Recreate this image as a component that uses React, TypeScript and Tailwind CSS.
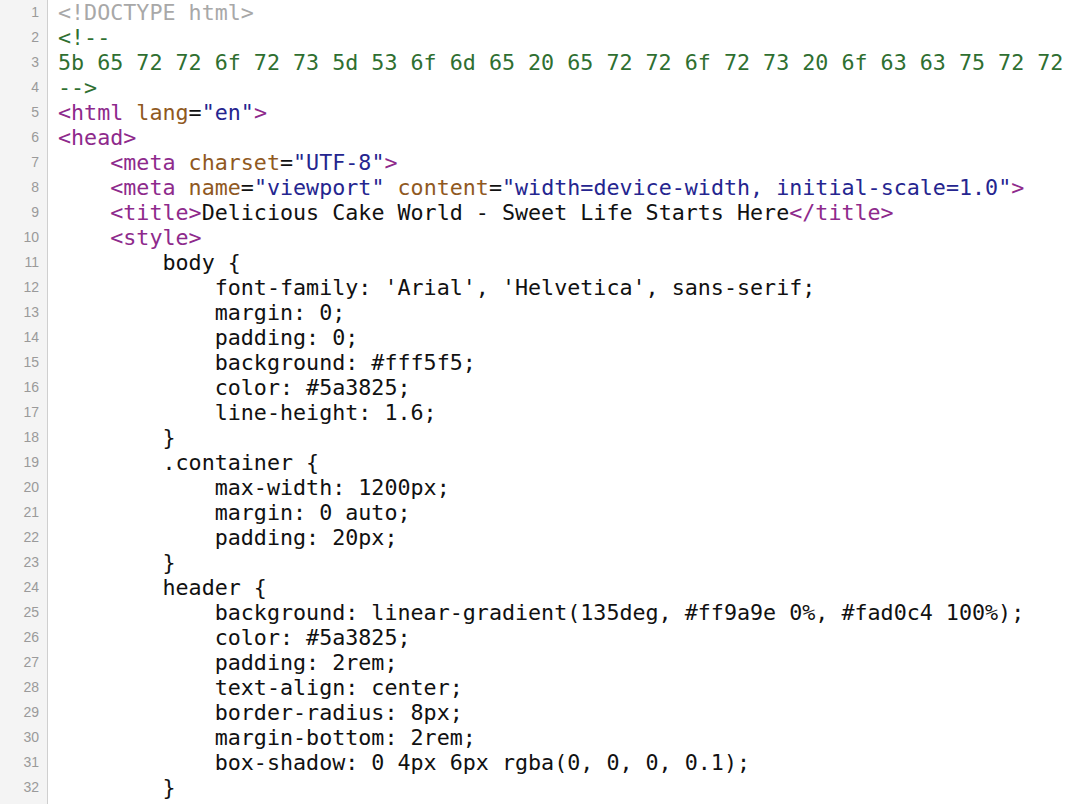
import React from "react";

type Seg = [string, string];

const T = "text-[#8e2a8c]"; // tags
const A = "text-[#90591f]"; // attribute names
const V = "text-[#25258f]"; // attribute values
const C = "text-[#2f6f31]"; // comments
const D = "text-[#a8a8a8]"; // doctype
const K = "text-[#111111]"; // plain

const lines: Seg[][] = [
  [[D, "<!DOCTYPE html>"]],
  [[C, "<!--"]],
  [[C, "5b 65 72 72 6f 72 73 5d 53 6f 6d 65 20 65 72 72 6f 72 73 20 6f 63 63 75 72 72"]],
  [[C, "-->"]],
  [[T, "<html "], [A, "lang"], [K, "="], [V, '"en"'], [T, ">"]],
  [[T, "<head>"]],
  [[K, "    "], [T, "<meta "], [A, "charset"], [K, "="], [V, '"UTF-8"'], [T, ">"]],
  [
    [K, "    "],
    [T, "<meta "],
    [A, "name"],
    [K, "="],
    [V, '"viewport"'],
    [K, " "],
    [A, "content"],
    [K, "="],
    [V, '"width=device-width, initial-scale=1.0"'],
    [T, ">"],
  ],
  [[K, "    "], [T, "<title>"], [K, "Delicious Cake World - Sweet Life Starts Here"], [T, "</title>"]],
  [[K, "    "], [T, "<style>"]],
  [[K, "        body {"]],
  [[K, "            font-family: 'Arial', 'Helvetica', sans-serif;"]],
  [[K, "            margin: 0;"]],
  [[K, "            padding: 0;"]],
  [[K, "            background: #fff5f5;"]],
  [[K, "            color: #5a3825;"]],
  [[K, "            line-height: 1.6;"]],
  [[K, "        }"]],
  [[K, "        .container {"]],
  [[K, "            max-width: 1200px;"]],
  [[K, "            margin: 0 auto;"]],
  [[K, "            padding: 20px;"]],
  [[K, "        }"]],
  [[K, "        header {"]],
  [[K, "            background: linear-gradient(135deg, #ff9a9e 0%, #fad0c4 100%);"]],
  [[K, "            color: #5a3825;"]],
  [[K, "            padding: 2rem;"]],
  [[K, "            text-align: center;"]],
  [[K, "            border-radius: 8px;"]],
  [[K, "            margin-bottom: 2rem;"]],
  [[K, "            box-shadow: 0 4px 6px rgba(0, 0, 0, 0.1);"]],
  [[K, "        }"]],
];

export default function App() {
  return (
    <div className="w-[1080px] h-[804px] bg-white flex overflow-hidden">
      <div className="w-[48px] shrink-0 bg-[#f4f4f4] border-r border-[#cfcfcf] pr-[8px] h-full">
        {lines.map((_, i) => (
          <div
            key={i}
            className="h-[25px] leading-[25px] text-right text-[14px] text-[#9a9a9a] font-['Liberation_Sans',sans-serif]"
          >
            {i + 1}
          </div>
        ))}
      </div>
      <div className="pl-[10px] font-['DejaVu_Sans_Mono',monospace] text-[21.7px]">
        {lines.map((segs, i) => (
          <div key={i} className="h-[25px] leading-[25px] whitespace-pre">
            {segs.map(([cls, txt], j) => (
              <span key={j} className={cls}>
                {txt}
              </span>
            ))}
          </div>
        ))}
      </div>
    </div>
  );
}
